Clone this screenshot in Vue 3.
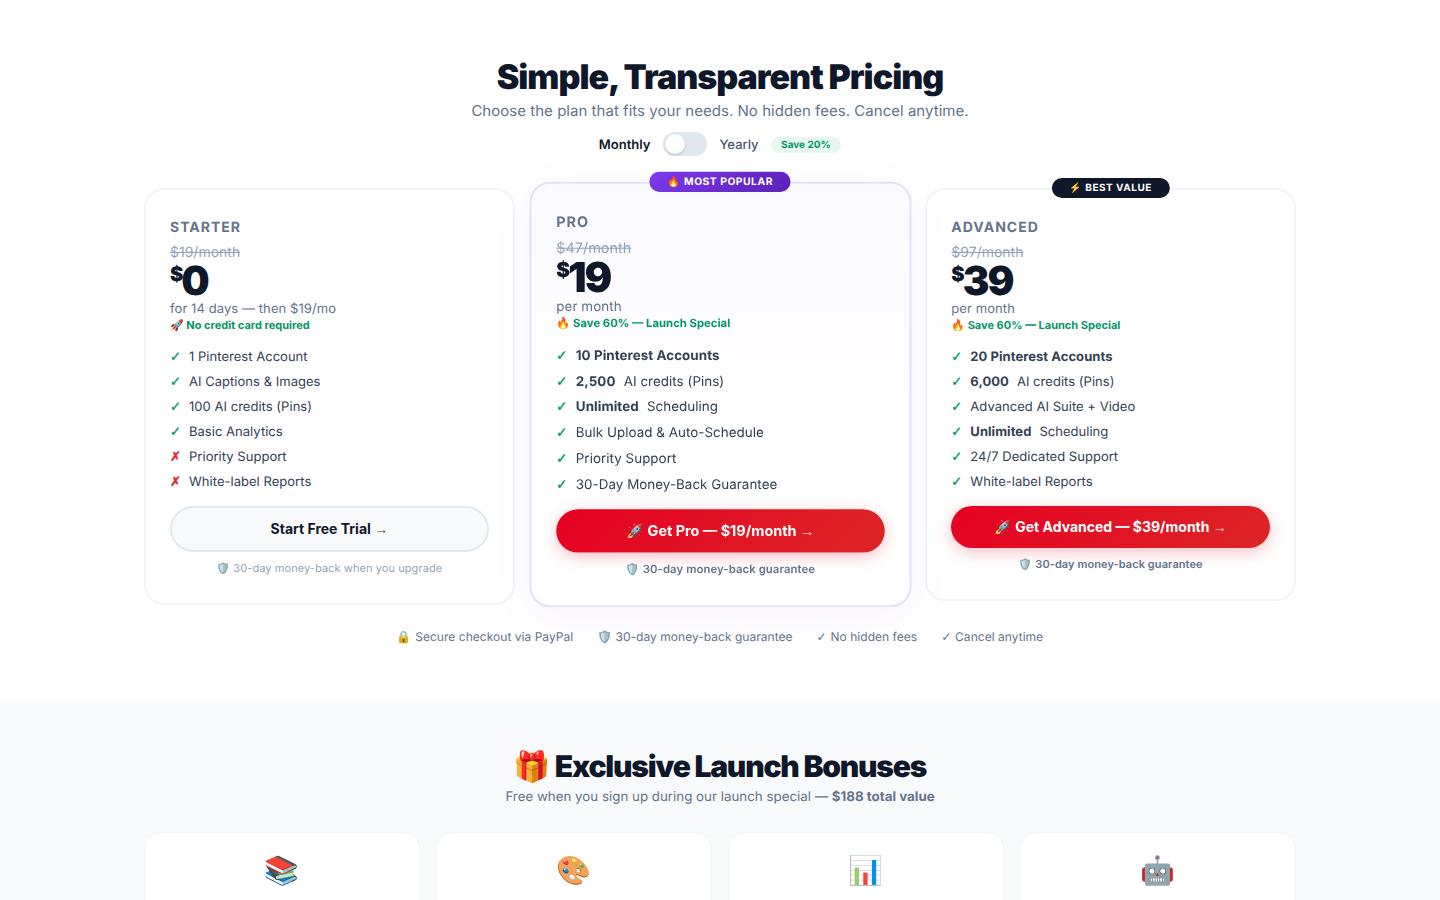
<script setup>
const plans = [
  {
    name: 'Starter', old: '$19/month', price: '0', per: 'for 14 days — then $19/mo', save: '🚀 No credit card required',
    features: [
      { ok: true, text: '1 Pinterest Account' },
      { ok: true, text: 'AI Captions & Images' },
      { ok: true, text: '100 AI credits (Pins)' },
      { ok: true, text: 'Basic Analytics' },
      { ok: false, text: 'Priority Support' },
      { ok: false, text: 'White-label Reports' },
    ],
    cta: 'Start Free Trial', ctaClass: 'ghost', note: '🛡️ 30-day money-back when you upgrade', noteClass: 'light',
  },
  {
    name: 'Pro', cls: 'pro', badge: '🔥 MOST POPULAR', old: '$47/month', price: '19', per: 'per month', save: '🔥 Save 60% — Launch Special',
    features: [
      { ok: true, bold: '10 Pinterest Accounts' },
      { ok: true, bold: '2,500', text: 'AI credits (Pins)' },
      { ok: true, bold: 'Unlimited', text: 'Scheduling' },
      { ok: true, text: 'Bulk Upload & Auto-Schedule' },
      { ok: true, text: 'Priority Support' },
      { ok: true, text: '30-Day Money-Back Guarantee' },
    ],
    cta: '🚀 Get Pro — $19/month', ctaClass: 'red', note: '🛡️ 30-day money-back guarantee', noteClass: 'strong',
  },
  {
    name: 'Advanced', cls: 'adv', badge: '⚡ BEST VALUE', old: '$97/month', price: '39', per: 'per month', save: '🔥 Save 60% — Launch Special',
    features: [
      { ok: true, bold: '20 Pinterest Accounts' },
      { ok: true, bold: '6,000', text: 'AI credits (Pins)' },
      { ok: true, text: 'Advanced AI Suite + Video' },
      { ok: true, bold: 'Unlimited', text: 'Scheduling' },
      { ok: true, text: '24/7 Dedicated Support' },
      { ok: true, text: 'White-label Reports' },
    ],
    cta: '🚀 Get Advanced — $39/month', ctaClass: 'red', note: '🛡️ 30-day money-back guarantee', noteClass: 'strong',
  },
]
const trust = [
  { text: '🔒 Secure checkout via PayPal' },
  { text: '🛡️ 30-day money-back guarantee' },
  { check: true, text: 'No hidden fees' },
  { check: true, text: 'Cancel anytime' },
]
const bonuses = ['📚', '🎨', '📊', '🤖']
</script>

<template>
  <div class="page">
    <section class="pricing">
      <h1>Simple, Transparent Pricing</h1>
      <p class="sub">Choose the plan that fits your needs. No hidden fees. Cancel anytime.</p>
      <div class="toggle-row">
        <span class="monthly">Monthly</span>
        <span class="track"><span class="knob"></span></span>
        <span class="yearly">Yearly</span>
        <span class="pill">Save 20%</span>
      </div>
      <div class="grid">
        <article v-for="p in plans" :key="p.name" class="card" :class="p.cls">
          <span v-if="p.badge" class="badge">{{ p.badge }}</span>
          <div class="name">{{ p.name }}</div>
          <div class="old">{{ p.old }}</div>
          <div class="price"><span class="cur">$</span>{{ p.price }}</div>
          <div class="per">{{ p.per }}</div>
          <div class="save">{{ p.save }}</div>
          <ul class="features">
            <li v-for="f in p.features" :key="(f.bold || '') + (f.text || '')">
              <span class="mark" :class="{ no: !f.ok }">{{ f.ok ? '✓' : '✗' }}</span>
              <span class="ftext"><b v-if="f.bold">{{ f.bold }}</b><span v-if="f.text">{{ f.text }}</span></span>
            </li>
          </ul>
          <button class="cta" :class="p.ctaClass">{{ p.cta }} <span class="arrow">→</span></button>
          <div class="note" :class="p.noteClass">{{ p.note }}</div>
        </article>
      </div>
      <div class="trust">
        <span v-for="t in trust" :key="t.text"><span v-if="t.check" class="tcheck">✓ </span>{{ t.text }}</span>
      </div>
    </section>
    <section class="bonus">
      <h2>🎁 Exclusive Launch Bonuses</h2>
      <p class="bsub">Free when you sign up during our launch special — <b>$188 total value</b></p>
      <div class="bgrid">
        <div v-for="b in bonuses" :key="b" class="bcard"><span class="bicon">{{ b }}</span></div>
      </div>
    </section>
  </div>
</template>

<style>
html, body { margin: 0; background: #fff; }
</style>

<style scoped>
.page {
  height: 900px;
  overflow: hidden;
  font-family: Inter, "Noto Color Emoji", sans-serif;
  color: #0f172a;
  background: #fff;
  text-rendering: geometricPrecision;
}
.pricing {
  height: 700px;
  box-sizing: border-box;
  padding-top: 57px;
  text-align: center;
}
h1 {
  margin: 0;
  font-size: 34px;
  line-height: 42px;
  font-weight: 900;
  letter-spacing: -1px;
}
.sub {
  margin: 0;
  font-size: 15px;
  line-height: 24px;
  letter-spacing: .03px;
  color: #64748b;
}
.toggle-row {
  margin-top: 9px;
  height: 24px;
  display: flex;
  align-items: center;
  justify-content: center;
  gap: 12px;
  font-size: 13px;
}
.monthly {
  margin: 2px 1px 0 0;
  font-weight: 600;
  color: #0f172a;
}
.yearly {
  margin-top: 2px;
  font-weight: 500;
  color: #475569;
}
.track {
  width: 44px;
  height: 24px;
  border-radius: 12px;
  background: #e2e8f0;
  position: relative;
}
.knob {
  position: absolute;
  left: 2px;
  top: 2px;
  width: 20px;
  height: 20px;
  border-radius: 50%;
  background: #fff;
  box-shadow: 0 1px 3px rgba(0,0,0,.2);
}
.pill {
  margin-top: 2px;
  padding: 2px 10.5px;
  border-radius: 999px;
  background: #e7f8f1;
  color: #059669;
  font-size: 10px;
  font-weight: 700;
  line-height: 12px;
}
.grid {
  width: 1152px;
  margin: 32px auto 0;
  display: grid;
  grid-template-columns: repeat(3, 1fr);
  gap: 20px;
  align-items: start;
  text-align: left;
}
.card {
  position: relative;
  box-sizing: border-box;
  padding: 28px 24px;
  border: 2px solid #f1f5f9;
  border-radius: 20px;
  background: #fff;
}
.card.pro {
  transform: scale(1.03);
  border-color: #e6dffb;
  background: linear-gradient(180deg, #fafaff 0%, #fff 60%);
  box-shadow: 0 8px 40px rgba(124,58,237,.06);
  z-index: 1;
}
.badge {
  position: absolute;
  top: -12px;
  left: 50%;
  transform: translateX(-50%);
  padding: 0 18px;
  height: 20px;
  line-height: 20px;
  border-radius: 999px;
  font-size: 10px;
  font-weight: 700;
  letter-spacing: .5px;
  white-space: nowrap;
  color: #fff;
  background: #0f172a;
}
.pro .badge {
  padding: 0 17.5px;
  background: linear-gradient(135deg, #7c3aed, #5b21b6);
}
.name {
  font-size: 14px;
  line-height: 20px;
  font-weight: 700;
  letter-spacing: 1px;
  text-transform: uppercase;
  color: #64748b;
}
.old {
  margin-top: 6px;
  font-size: 14px;
  line-height: 17px;
  color: #94a3b8;
  text-decoration: line-through;
}
.price {
  margin-top: -1px;
  font-size: 40px;
  line-height: 42px;
  font-weight: 900;
  letter-spacing: -2px;
  color: #0f172a;
}
.cur {
  font-size: 20px;
  vertical-align: super;
  line-height: 0;
}
.per {
  font-size: 13px;
  line-height: 16px;
  margin-top: -1px;
  letter-spacing: .08px;
  color: #64748b;
}
.save {
  margin-top: 1px;
  font-size: 11px;
  line-height: 15px;
  font-weight: 700;
  color: #059669;
}
.features {
  list-style: none;
  margin: 11px 0 0;
  padding: 0;
}
.features li {
  height: 25px;
  display: flex;
  align-items: center;
  font-size: 13px;
  letter-spacing: .03px;
  color: #334155;
}
.mark {
  width: 19px;
  flex: none;
  font-family: "DejaVu Sans", sans-serif;
  font-weight: 700;
  color: #059669;
  padding-top: 1px;
  -webkit-text-stroke: .4px currentColor;
}
.mark.no { color: #dc2626; }
.ftext { display: flex; gap: 8px; }
.ftext b { font-weight: 700; letter-spacing: .05px; }
.cta {
  display: block;
  box-sizing: border-box;
  width: 100%;
  margin-top: 12px;
  padding: 12px;
  border: 0;
  border-radius: 999px;
  font-family: inherit;
  font-size: 14px;
  line-height: 17px;
  font-weight: 700;
  cursor: pointer;
}
.cta.red {
  color: #fff;
  background: linear-gradient(135deg, #e60023, #dc2626);
  box-shadow: 0 4px 16px rgba(230,0,35,.25);
}
.cta.ghost {
  color: #0f172a;
  background: #f8fafc;
  border: 2px solid #e2e8f0;
}
.arrow {
  font-family: "Liberation Sans", sans-serif;
  font-weight: 400;
  opacity: .8;
}
.note {
  margin-top: 9px;
  text-align: center;
  font-size: 11px;
  line-height: 14px;
  letter-spacing: .08px;
}
.note.light { color: #94a3b8; }
.note.strong { color: #64748b; font-weight: 600; }
.trust {
  margin-top: 24px;
  display: flex;
  justify-content: center;
  gap: 24px;
  font-size: 12px;
  line-height: 16px;
  letter-spacing: .03px;
  color: #64748b;
}
.tcheck { font-family: "DejaVu Sans", sans-serif; }
.bonus {
  height: 200px;
  box-sizing: border-box;
  padding-top: 48px;
  background: #f8fafc;
  text-align: center;
}
h2 {
  margin: 0;
  font-size: 30px;
  line-height: 38px;
  font-weight: 900;
  letter-spacing: -1.2px;
}
.bsub {
  margin: 1px 0 0;
  font-size: 13.34px;
  line-height: 20px;
  color: #64748b;
}
.bgrid {
  width: 1152px;
  margin: 25px auto 0;
  display: grid;
  grid-template-columns: repeat(4, 1fr);
  gap: 16px;
}
.bcard {
  height: 160px;
  box-sizing: border-box;
  padding-top: 20px;
  background: #fff;
  border-radius: 16px;
  border: 1px solid #f1f5f9;
}
.bicon { font-size: 28px; line-height: 34px; }
</style>
